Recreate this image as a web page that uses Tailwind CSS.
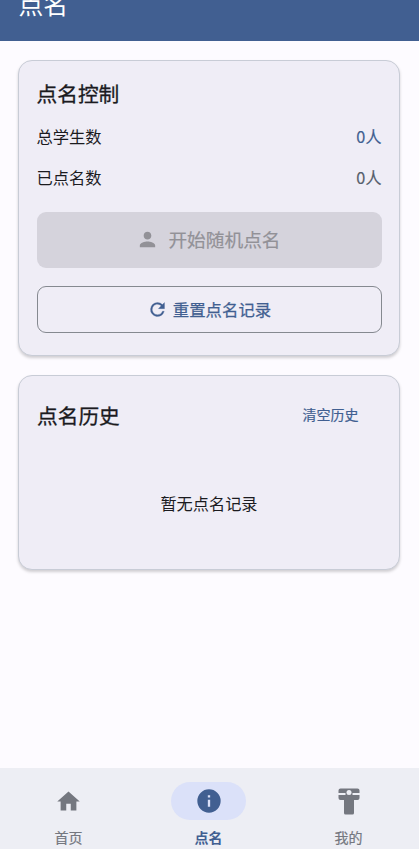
<!DOCTYPE html>
<html lang="zh-CN">
<head>
<meta charset="utf-8">
<meta name="viewport" content="width=device-width, initial-scale=1">
<title>点名</title>
<script src="https://cdn.jsdelivr.net/npm/@tailwindcss/browser@4"></script>
</head>
<body class="flex h-[849px] w-[419px] flex-col overflow-hidden bg-[#fdfbff] font-['Noto_Sans_CJK_SC',sans-serif] text-[#1b1b1f]">
  <header class="flex h-[41px] shrink-0 items-end bg-[#415f91] pb-[20px] pl-[18.5px] text-white">
    <h1 class="text-[24.8px] leading-[36px]">点名</h1>
  </header>

  <main class="flex flex-1 flex-col gap-[19px] pl-[18px] pr-[19px] pt-[19px]">
    <section class="flex h-[296px] flex-col rounded-[14px] border border-[#c8ccd6] bg-[#efedf6] px-[17.5px] shadow-[0_2px_3px_rgba(0,0,0,0.18)]">
      <h2 class="mt-[17px] text-[20.7px] leading-[30px] [-webkit-text-stroke:0.3px_currentColor]">点名控制</h2>
      <div class="mt-[16px] flex items-center justify-between text-[16.3px] leading-[24px]">
        <span>总学生数</span>
        <span class="text-[#415f91] [-webkit-text-stroke:0.15px_currentColor]">0人</span>
      </div>
      <div class="mt-[17px] flex items-center justify-between text-[16.3px] leading-[24px]">
        <span>已点名数</span>
        <span class="text-[#565e6c] [-webkit-text-stroke:0.15px_currentColor]">0人</span>
      </div>
      <button class="mt-[22.5px] flex h-[56px] w-full shrink-0 items-center justify-center gap-[9px] rounded-[9px] bg-[#d5d3dc] pb-[1px] pr-[1px] text-[18.7px] leading-[28px] text-[#929197]">
        <svg class="size-[23px]" viewBox="0 0 24 24" fill="currentColor"><path d="M12 12c2.21 0 4-1.79 4-4s-1.79-4-4-4-4 1.790-4 4 1.790 4 4 4zm0 2c-2.670 0-8 1.340-8 4v2h16v-2c0-2.660-5.330-4-8-4z"/></svg>
        <span class="[-webkit-text-stroke:0.2px_currentColor]">开始随机点名</span>
      </button>
      <button class="mt-[18.5px] flex h-[47px] w-full shrink-0 items-center justify-center gap-[5px] rounded-[9px] border border-[#858990] pb-[1px] text-[16.4px] leading-[24px] text-[#415f91]">
        <svg class="size-[21px]" viewBox="0 0 24 24" fill="currentColor" stroke="currentColor" stroke-width="0.3"><path d="M17.65 6.35A7.958 7.958 0 0 0 12 4a8 8 0 1 0 7.73 10h-2.08A5.99 5.99 0 0 1 12 18a6 6 0 1 1 4.22-10.22L13 11h7V4l-2.35 2.35z"/></svg>
        <span class="[-webkit-text-stroke:0.25px_currentColor]">重置点名记录</span>
      </button>
    </section>

    <section class="flex h-[195px] flex-col rounded-[14px] border border-[#c8ccd6] bg-[#efedf6] px-[18px] shadow-[0_2px_3px_rgba(0,0,0,0.18)]">
      <div class="mt-[24px] flex items-center justify-between pr-[22.5px]">
        <h2 class="text-[20.7px] leading-[30px] [-webkit-text-stroke:0.3px_currentColor]">点名历史</h2>
        <button class="pb-[2px] text-[14px] leading-[20px] text-[#415f91] [-webkit-text-stroke:0.2px_currentColor]">清空历史</button>
      </div>
      <p class="mt-[61px] text-center text-[16.2px] leading-[24px]">暂无点名记录</p>
    </section>
  </main>

  <nav class="grid h-[81px] shrink-0 grid-cols-[137px_143px_137px] bg-[#edeef4] text-[14px] leading-[20px] text-[#74777f]">
    <a class="flex flex-col items-center pt-[14px]">
      <span class="flex h-[38px] w-[74px] items-center justify-center rounded-full">
        <svg class="size-[27px]" viewBox="0 0 24 24" fill="currentColor"><path d="M10 20v-6h4v6h5v-8h3L12 3 2 12h3v8z"/></svg>
      </span>
      <span class="mt-[7px] [-webkit-text-stroke:0.2px_currentColor]">首页</span>
    </a>
    <a class="flex flex-col items-center pt-[14px] text-[#415f91]">
      <span class="flex h-[38px] w-[75px] items-center justify-center rounded-full bg-[#dbe1f9]">
        <svg class="size-[28px]" viewBox="0 0 24 24" fill="currentColor"><path d="M12 2a10 10 0 1 0 0 20 10 10 0 0 0 0-20zm1 15h-2v-6h2v6zm0-8h-2V7h2v2z"/></svg>
      </span>
      <span class="mt-[7px] font-bold">点名</span>
    </a>
    <a class="flex flex-col items-center pt-[14px]">
      <span class="flex h-[38px] w-[74px] items-center justify-center rounded-full">
        <svg class="h-[27px] w-[22px]" viewBox="0 0 22 27" fill="currentColor"><path d="M2.500 0.500h17a2 2 0 0 1 2 2V5H.5V2.500a2 2 0 0 1 2-2zM.5 7h21v3a2 2 0 0 1-2 2H16v13a1.500 1.500 0 0 1-1.500 1.500h-7A1.500 1.500 0 0 1 6 25V12H2.500a2 2 0 0 1-2-2z"/><path d="M7.500 5h7v2.500h-7z"/><circle cx="11" cy="4.500" r="2.500" fill="#edeef4"/></svg>
      </span>
      <span class="mt-[7px] [-webkit-text-stroke:0.2px_currentColor]">我的</span>
    </a>
  </nav>
</body>
</html>
